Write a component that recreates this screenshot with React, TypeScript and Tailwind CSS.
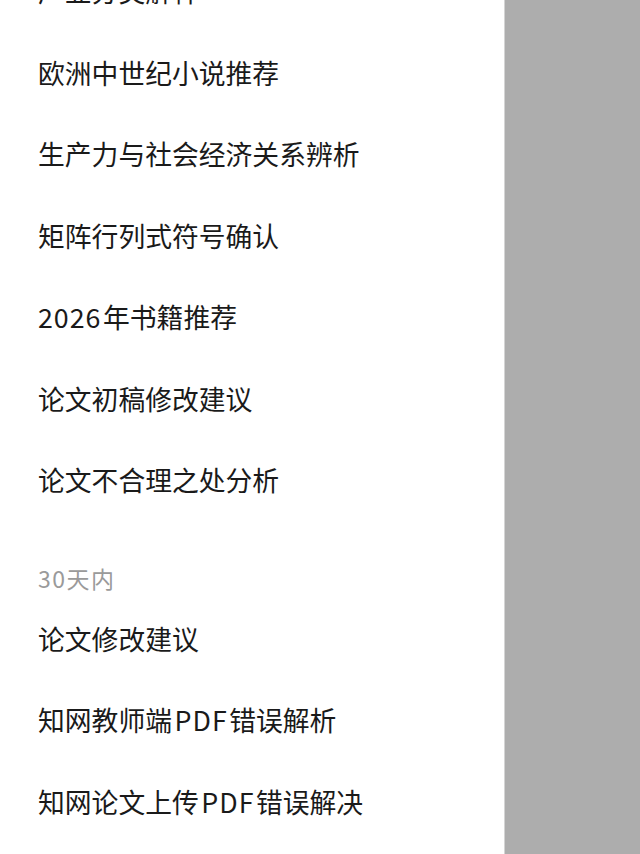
const RECENT = [
  '产业分类解释',
  '欧洲中世纪小说推荐',
  '生产力与社会经济关系辨析',
  '矩阵行列式符号确认',
  '2026年书籍推荐',
  '论文初稿修改建议',
  '论文不合理之处分析',
]

const MONTH = ['论文修改建议', '知网教师端PDF错误解析', '知网论文上传PDF错误解决']

// Latin runs inside CJK titles get a little extra room, like the system font does.
function Title({ text }: { text: string }) {
  const parts = text.split(/([A-Za-z0-9]+)/).filter(Boolean)
  return (
    <>
      {parts.map((p, i) =>
        /^[A-Za-z0-9]+$/.test(p) ? (
          <span
            key={i}
            className={`tracking-[1px] ${i > 0 ? 'ml-[2.5px]' : ''} ${i < parts.length - 1 ? 'mr-[1.5px]' : ''}`}
          >
            {p}
          </span>
        ) : (
          <span key={i}>{p}</span>
        ),
      )}
    </>
  )
}

function Item({ title }: { title: string }) {
  return (
    <div className="flex h-[81.5px] items-center whitespace-nowrap px-[38px] text-[26.8px] leading-[1.3] text-[#1a1a1a]">
      <Title text={title} />
    </div>
  )
}

export default function App() {
  return (
    <div
      className="flex h-[854px] w-[640px] overflow-hidden bg-[#adadad]"
      style={{ fontFamily: '"Noto Sans CJK SC", "Noto Sans", sans-serif' }}
    >
      {/* Drawer panel */}
      <div className="h-full w-[505px] shrink-0 overflow-hidden border-r border-[#d4d4d4] bg-white">
        <div className="mt-[-49px]">
          {RECENT.map((t) => (
            <Item key={t} title={t} />
          ))}
          <div className="mt-[37px] flex h-[40px] items-center whitespace-nowrap px-[38px] text-[23px] leading-[1.3] tracking-[1.5px] text-[#9a9a9a]">
            30天内
          </div>
          {MONTH.map((t) => (
            <Item key={t} title={t} />
          ))}
        </div>
      </div>
      {/* Scrim */}
      <div className="flex-1" />
    </div>
  )
}
